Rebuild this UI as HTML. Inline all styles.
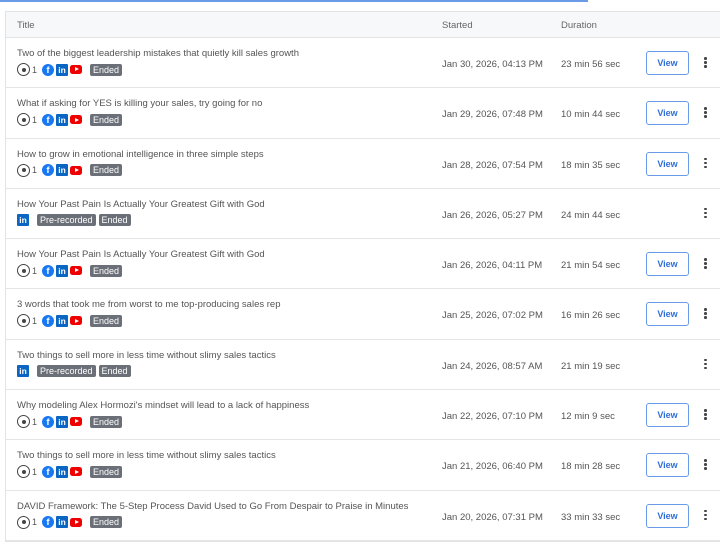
<!DOCTYPE html>
<html><head><style>
*{box-sizing:border-box;margin:0;padding:0}
body{width:720px;height:513px;overflow:hidden;background:#fff;font-family:"Liberation Sans",sans-serif;color:#555;position:relative}
.top{position:absolute;left:0;top:0;width:588px;height:2px;background:#6a9be6}
.tbl{position:absolute;left:5px;top:11px;width:730px;border:1px solid #e3e3e3;border-right:none}
.hd{height:26px;background:#f7f8f9;border-bottom:1px solid #e3e3e3;position:relative;font-size:9.5px;color:#666}
.hd span{position:absolute;top:8px}
.row{height:50.3px;border-bottom:1px solid #e5e5e5;position:relative;font-size:9.5px}
.t{position:absolute;left:11px;top:10px;color:#555;white-space:nowrap}
.ic{position:absolute;left:11px;top:25px;height:13px;display:flex;align-items:center}
.d{position:absolute;left:436px;top:21px}
.du{position:absolute;left:555px;top:21px}
.v{position:absolute;left:640px;top:13px;width:43px;height:24px;border:1px solid #6a9be6;border-radius:3px;color:#2f6fd6;font-weight:bold;font-size:9px;text-align:center;line-height:22px}
.m{position:absolute;left:698px;top:19px;width:3px}
.m i{display:block;width:2.5px;height:2.5px;background:#444;border-radius:50%;margin-bottom:1.5px}
.rad{width:13px;height:13px;border:1.6px solid #444;border-radius:50%;display:flex;align-items:center;justify-content:center}
.rad:after{content:"";width:4px;height:4px;background:#444;border-radius:50%}
.n{font-size:9px;color:#555;margin:0 5px 0 2px}
.fb{width:12px;height:12px;border-radius:50%;background:#1877f2;color:#fff;font-size:9.5px;font-weight:bold;text-align:center;line-height:13px;margin-right:2px}
.li{width:12px;height:12px;background:#0a66c2;color:#fff;font-size:8.5px;font-weight:bold;line-height:12px;text-align:center;border-radius:1px;margin-right:2px}
.yt{width:12px;height:9px;background:#e00;border-radius:2.5px;position:relative;margin-right:8px}
.yt:after{content:"";position:absolute;left:4.5px;top:2.3px;border-left:4px solid #fff;border-top:2.2px solid transparent;border-bottom:2.2px solid transparent}
.b{background:#6b6f78;color:#fff;font-size:9px;padding:0 3px;height:12px;line-height:12px;border-radius:2px;margin-right:3px}
</style></head><body>
<div class="top"></div>
<div class="tbl">
<div class="hd"><span style="left:11px">Title</span><span style="left:436px">Started</span><span style="left:555px">Duration</span></div>

<div class="row"><div class="t">Two of the biggest leadership mistakes that quietly kill sales growth</div><div class="ic"><div class="rad"></div><span class="n">1</span><div class="fb">f</div><div class="li">in</div><div class="yt"></div><span class="b">Ended</span></div><div class="d">Jan 30, 2026, 04:13 PM</div><div class="du">23 min 56 sec</div><div class="v">View</div><div class="m"><i></i><i></i><i></i></div></div>

<div class="row"><div class="t">What if asking for YES is killing your sales, try going for no</div><div class="ic"><div class="rad"></div><span class="n">1</span><div class="fb">f</div><div class="li">in</div><div class="yt"></div><span class="b">Ended</span></div><div class="d">Jan 29, 2026, 07:48 PM</div><div class="du">10 min 44 sec</div><div class="v">View</div><div class="m"><i></i><i></i><i></i></div></div>

<div class="row"><div class="t">How to grow in emotional intelligence in three simple steps</div><div class="ic"><div class="rad"></div><span class="n">1</span><div class="fb">f</div><div class="li">in</div><div class="yt"></div><span class="b">Ended</span></div><div class="d">Jan 28, 2026, 07:54 PM</div><div class="du">18 min 35 sec</div><div class="v">View</div><div class="m"><i></i><i></i><i></i></div></div>

<div class="row"><div class="t">How Your Past Pain Is Actually Your Greatest Gift with God</div><div class="ic"><div class="li" style="margin-right:8px">in</div><span class="b">Pre-recorded</span><span class="b">Ended</span></div><div class="d">Jan 26, 2026, 05:27 PM</div><div class="du">24 min 44 sec</div><div class="m"><i></i><i></i><i></i></div></div>

<div class="row"><div class="t">How Your Past Pain Is Actually Your Greatest Gift with God</div><div class="ic"><div class="rad"></div><span class="n">1</span><div class="fb">f</div><div class="li">in</div><div class="yt"></div><span class="b">Ended</span></div><div class="d">Jan 26, 2026, 04:11 PM</div><div class="du">21 min 54 sec</div><div class="v">View</div><div class="m"><i></i><i></i><i></i></div></div>

<div class="row"><div class="t">3 words that took me from worst to me top-producing sales rep</div><div class="ic"><div class="rad"></div><span class="n">1</span><div class="fb">f</div><div class="li">in</div><div class="yt"></div><span class="b">Ended</span></div><div class="d">Jan 25, 2026, 07:02 PM</div><div class="du">16 min 26 sec</div><div class="v">View</div><div class="m"><i></i><i></i><i></i></div></div>

<div class="row"><div class="t">Two things to sell more in less time without slimy sales tactics</div><div class="ic"><div class="li" style="margin-right:8px">in</div><span class="b">Pre-recorded</span><span class="b">Ended</span></div><div class="d">Jan 24, 2026, 08:57 AM</div><div class="du">21 min 19 sec</div><div class="m"><i></i><i></i><i></i></div></div>

<div class="row"><div class="t">Why modeling Alex Hormozi's mindset will lead to a lack of happiness</div><div class="ic"><div class="rad"></div><span class="n">1</span><div class="fb">f</div><div class="li">in</div><div class="yt"></div><span class="b">Ended</span></div><div class="d">Jan 22, 2026, 07:10 PM</div><div class="du">12 min 9 sec</div><div class="v">View</div><div class="m"><i></i><i></i><i></i></div></div>

<div class="row"><div class="t">Two things to sell more in less time without slimy sales tactics</div><div class="ic"><div class="rad"></div><span class="n">1</span><div class="fb">f</div><div class="li">in</div><div class="yt"></div><span class="b">Ended</span></div><div class="d">Jan 21, 2026, 06:40 PM</div><div class="du">18 min 28 sec</div><div class="v">View</div><div class="m"><i></i><i></i><i></i></div></div>

<div class="row"><div class="t">DAVID Framework: The 5-Step Process David Used to Go From Despair to Praise in Minutes</div><div class="ic"><div class="rad"></div><span class="n">1</span><div class="fb">f</div><div class="li">in</div><div class="yt"></div><span class="b">Ended</span></div><div class="d">Jan 20, 2026, 07:31 PM</div><div class="du">33 min 33 sec</div><div class="v">View</div><div class="m"><i></i><i></i><i></i></div></div>
</div>
</body></html>
